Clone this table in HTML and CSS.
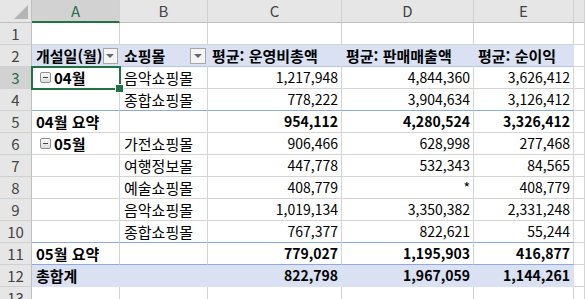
FILE: index.html
```html
<!DOCTYPE html>
<html lang="ko">
<head>
    <meta charset="UTF-8">
    <title>피벗 테이블</title>
    <link rel="stylesheet" href="styles.css">
</head>
<body>
    <div class="sheet">
        <!-- column headers -->
        <div class="corner"></div>
        <div class="colhead sel">A</div>
        <div class="colhead">B</div>
        <div class="colhead">C</div>
        <div class="colhead">D</div>
        <div class="colhead">E</div>
        <div class="colhead"></div>

        <!-- row 1 -->
        <div class="rowhead">1</div>
        <div class="c"></div><div class="c"></div><div class="c"></div><div class="c"></div><div class="c"></div><div class="c"></div>

        <!-- row 2: pivot header -->
        <div class="rowhead">2</div>
        <div class="c hd">개설일(월)<span class="dd"></span></div>
        <div class="c hd">쇼핑몰<span class="dd"></span></div>
        <div class="c hd">평균: 운영비총액</div>
        <div class="c hd">평균: 판매매출액</div>
        <div class="c hd">평균: 순이익</div>
        <div class="c"></div>

        <!-- row 3 -->
        <div class="rowhead sel">3</div>
        <div class="c b active"><span class="tg"></span>04월</div>
        <div class="c">음악쇼핑몰</div>
        <div class="c num">1,217,948</div>
        <div class="c num">4,844,360</div>
        <div class="c num">3,626,412</div>
        <div class="c"></div>

        <!-- row 4 -->
        <div class="rowhead">4</div>
        <div class="c bl"></div>
        <div class="c bl">종합쇼핑몰</div>
        <div class="c num bl">778,222</div>
        <div class="c num bl">3,904,634</div>
        <div class="c num bl">3,126,412</div>
        <div class="c"></div>

        <!-- row 5: subtotal -->
        <div class="rowhead">5</div>
        <div class="c b">04월 요약</div>
        <div class="c"></div>
        <div class="c num b">954,112</div>
        <div class="c num b">4,280,524</div>
        <div class="c num b">3,326,412</div>
        <div class="c"></div>

        <!-- row 6 -->
        <div class="rowhead">6</div>
        <div class="c b"><span class="tg"></span>05월</div>
        <div class="c">가전쇼핑몰</div>
        <div class="c num">906,466</div>
        <div class="c num">628,998</div>
        <div class="c num">277,468</div>
        <div class="c"></div>

        <!-- row 7 -->
        <div class="rowhead">7</div>
        <div class="c"></div>
        <div class="c">여행정보몰</div>
        <div class="c num">447,778</div>
        <div class="c num">532,343</div>
        <div class="c num">84,565</div>
        <div class="c"></div>

        <!-- row 8 -->
        <div class="rowhead">8</div>
        <div class="c"></div>
        <div class="c">예술쇼핑몰</div>
        <div class="c num">408,779</div>
        <div class="c num">*</div>
        <div class="c num">408,779</div>
        <div class="c"></div>

        <!-- row 9 -->
        <div class="rowhead">9</div>
        <div class="c"></div>
        <div class="c">음악쇼핑몰</div>
        <div class="c num">1,019,134</div>
        <div class="c num">3,350,382</div>
        <div class="c num">2,331,248</div>
        <div class="c"></div>

        <!-- row 10 -->
        <div class="rowhead">10</div>
        <div class="c bl"></div>
        <div class="c bl">종합쇼핑몰</div>
        <div class="c num bl">767,377</div>
        <div class="c num bl">822,621</div>
        <div class="c num bl">55,244</div>
        <div class="c"></div>

        <!-- row 11: subtotal -->
        <div class="rowhead">11</div>
        <div class="c b bl">05월 요약</div>
        <div class="c bl"></div>
        <div class="c num b bl">779,027</div>
        <div class="c num b bl">1,195,903</div>
        <div class="c num b bl">416,877</div>
        <div class="c"></div>

        <!-- row 12: grand total -->
        <div class="rowhead">12</div>
        <div class="c tot">총합계</div>
        <div class="c tot"></div>
        <div class="c num tot">822,798</div>
        <div class="c num tot">1,967,059</div>
        <div class="c num tot">1,144,261</div>
        <div class="c"></div>

        <!-- row 13 -->
        <div class="rowhead">13</div>
        <div class="c"></div><div class="c"></div><div class="c"></div><div class="c"></div><div class="c"></div><div class="c"></div>
    </div>
</body>
</html>
```

FILE: styles.css
```css
* {
    margin: 0;
    padding: 0;
    box-sizing: border-box;
}

body {
    background-color: white;
    font-family: 'Noto Sans CJK KR', 'Noto Sans', sans-serif;
    font-size: 15px;
    color: #000;
    overflow: hidden;
}

.sheet {
    display: grid;
    grid-template-columns: 32px 88px 88px 134px 132px 100px 1fr;
    grid-template-rows: 23px;
    grid-auto-rows: 22px;
    width: 585px;
}

/* headers */
.corner {
    background-color: #e6e6e6;
    border-right: 1px solid #bfbfbf;
    border-bottom: 1px solid #bfbfbf;
    position: relative;
}

.corner::after {
    content: '';
    position: absolute;
    right: 3px;
    bottom: 3px;
    border-left: 14px solid transparent;
    border-bottom: 14px solid #b4b4b4;
}

.colhead {
    background-color: #e6e6e6;
    border-right: 1px solid #d0d0d0;
    border-bottom: 1px solid #bfbfbf;
    color: #444;
    text-align: center;
    line-height: 22px;
}

.colhead.sel {
    background-color: #d2d2d2;
    color: #217346;
    border-bottom: 2px solid #217346;
}

.rowhead {
    background-color: #e6e6e6;
    border-right: 1px solid #bfbfbf;
    border-bottom: 1px solid #d0d0d0;
    color: #444;
    text-align: center;
    line-height: 21px;
}

.rowhead.sel {
    background-color: #d2d2d2;
    color: #217346;
}

/* cells */
.c {
    display: flex;
    align-items: center;
    padding: 0 3px 0 4px;
    border-right: 1px solid #d4d4d4;
    border-bottom: 1px solid #d4d4d4;
    white-space: nowrap;
    line-height: 21px;
}

.num {
    justify-content: flex-end;
    font-size: 14px;
}

.b {
    font-weight: 700;
}

.bl {
    border-bottom-color: #8ea9db;
}

.hd {
    background-color: #d9e1f2;
    font-weight: 700;
    border-right-color: #d9e1f2;
    border-bottom-color: #b4c6e7;
}

.tot {
    background-color: #d9e1f2;
    font-weight: 700;
    border-right-color: #d9e1f2;
    border-bottom-color: #d9e1f2;
}

/* filter dropdown button */
.dd {
    width: 16px;
    height: 16px;
    margin-left: auto;
    margin-right: -2px;
    border: 1px solid #a6a6a6;
    background-color: #f4f4f4;
    display: flex;
    justify-content: center;
    align-items: center;
}

.dd::after {
    content: '';
    border-left: 4px solid transparent;
    border-right: 4px solid transparent;
    border-top: 4px solid #666;
}

/* collapse toggle */
.tg {
    width: 11px;
    height: 11px;
    margin: 0 3px 0 4px;
    border: 1px solid #8f8f8f;
    border-radius: 2px;
    background: linear-gradient(#fbfbfb, #dcdcdc);
    display: flex;
    justify-content: center;
    align-items: center;
}

.tg::after {
    content: '';
    width: 5px;
    height: 1px;
    background-color: #444;
}

/* active cell */
.active {
    position: relative;
}

.active::before {
    content: '';
    position: absolute;
    left: -1px;
    top: -1px;
    right: -2px;
    bottom: -2px;
    border: 2px solid #217346;
    z-index: 1;
}

.active::after {
    content: '';
    position: absolute;
    right: -5px;
    bottom: -5px;
    width: 7px;
    height: 7px;
    background-color: #217346;
    border: 1px solid white;
    z-index: 2;
}
```
